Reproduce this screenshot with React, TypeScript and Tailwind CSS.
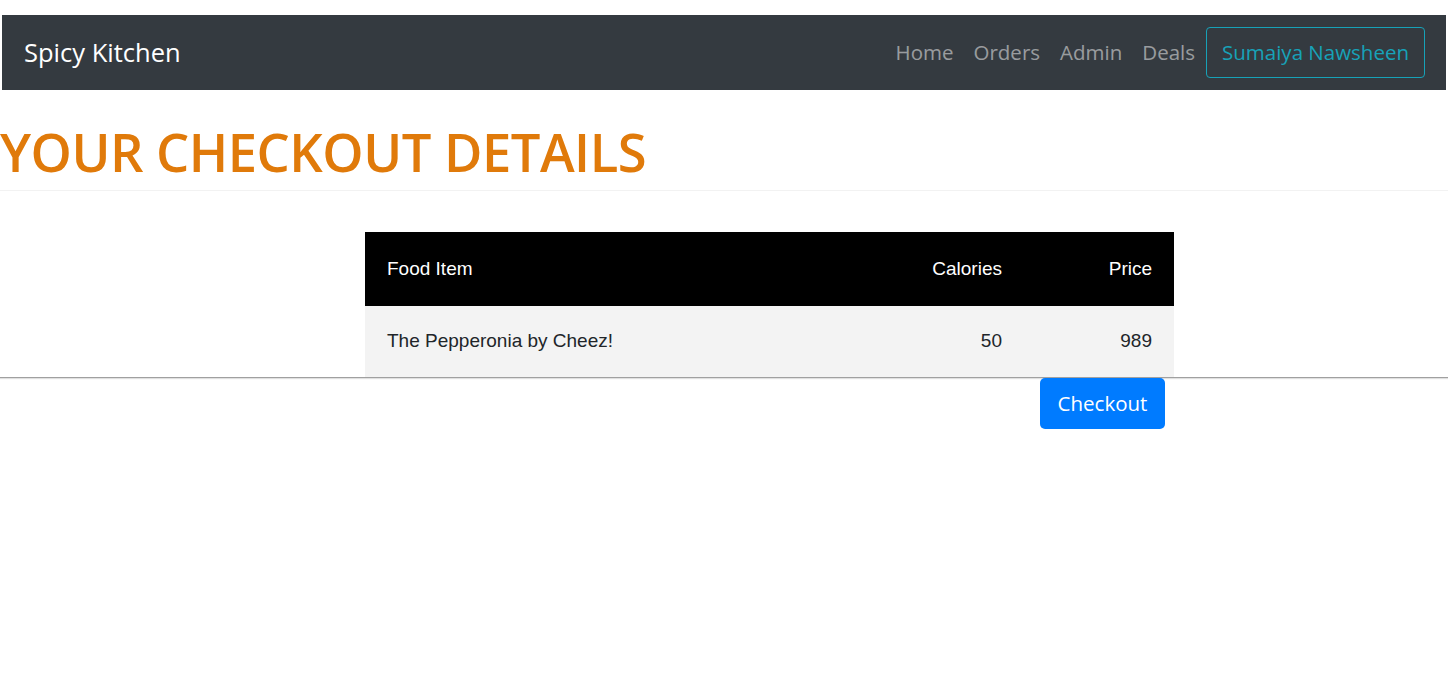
import React from "react";

const items = [{ name: "The Pepperonia by Cheez!", calories: 50, price: 989 }];

const App = () => {
  return (
    <div className="min-h-[687px] bg-white pt-[15px] font-['Open_Sans','Noto_Sans',sans-serif]">
      {/* Navbar */}
      <nav className="mx-[2px] h-[75px] bg-[#343a40] flex items-center justify-between pl-[22px] pr-[21px]">
        <a className="text-white text-[25.5px] leading-none">Spicy Kitchen</a>
        <div className="flex items-center">
          <div className="flex items-center gap-[20px] text-[20.5px] text-white/50 mr-[11px]">
            <a>Home</a>
            <a>Orders</a>
            <a>Admin</a>
            <a>Deals</a>
          </div>
          <button className="h-[51px] w-[219px] border border-[#17a2b8] rounded-[4px] text-[#17a2b8] text-[20.5px]">
            Sumaiya Nawsheen
          </button>
        </div>
      </nav>

      {/* Title */}
      <h1 className="mt-[28px] text-[#e07a0a] text-[52.5px] font-semibold leading-[68px] tracking-[-0.5px] pb-[4px] border-b border-[#f2f2f2]">
        YOUR CHECKOUT DETAILS
      </h1>

      {/* Table */}
      <div className="mt-[41px] border-b border-[#a0a0a0] shadow-[0_1px_1px_rgba(0,0,0,0.12)]">
        <table className="ml-[365px] w-[809px] font-['Liberation_Sans',Arial,sans-serif] text-[19px] border-collapse">
          <thead>
            <tr className="bg-black text-white h-[74px]">
              <th className="text-left font-normal px-[22px]">Food Item</th>
              <th className="text-right font-normal px-[22px] w-[200px]">Calories</th>
              <th className="text-right font-normal px-[22px] w-[150px]">Price</th>
            </tr>
          </thead>
          <tbody>
            {items.map((item) => (
              <tr key={item.name} className="bg-[#f3f3f3] text-[#212529] h-[71px]">
                <td className="px-[22px]">{item.name}</td>
                <td className="px-[22px] text-right">{item.calories}</td>
                <td className="px-[22px] text-right">{item.price}</td>
              </tr>
            ))}
          </tbody>
        </table>
      </div>

      <div className="pl-[1040px]">
        <button className="w-[125px] h-[51px] bg-[#007bff] text-white text-[20.5px] rounded-[5px]">
          Checkout
        </button>
      </div>
    </div>
  );
};

export default App;
